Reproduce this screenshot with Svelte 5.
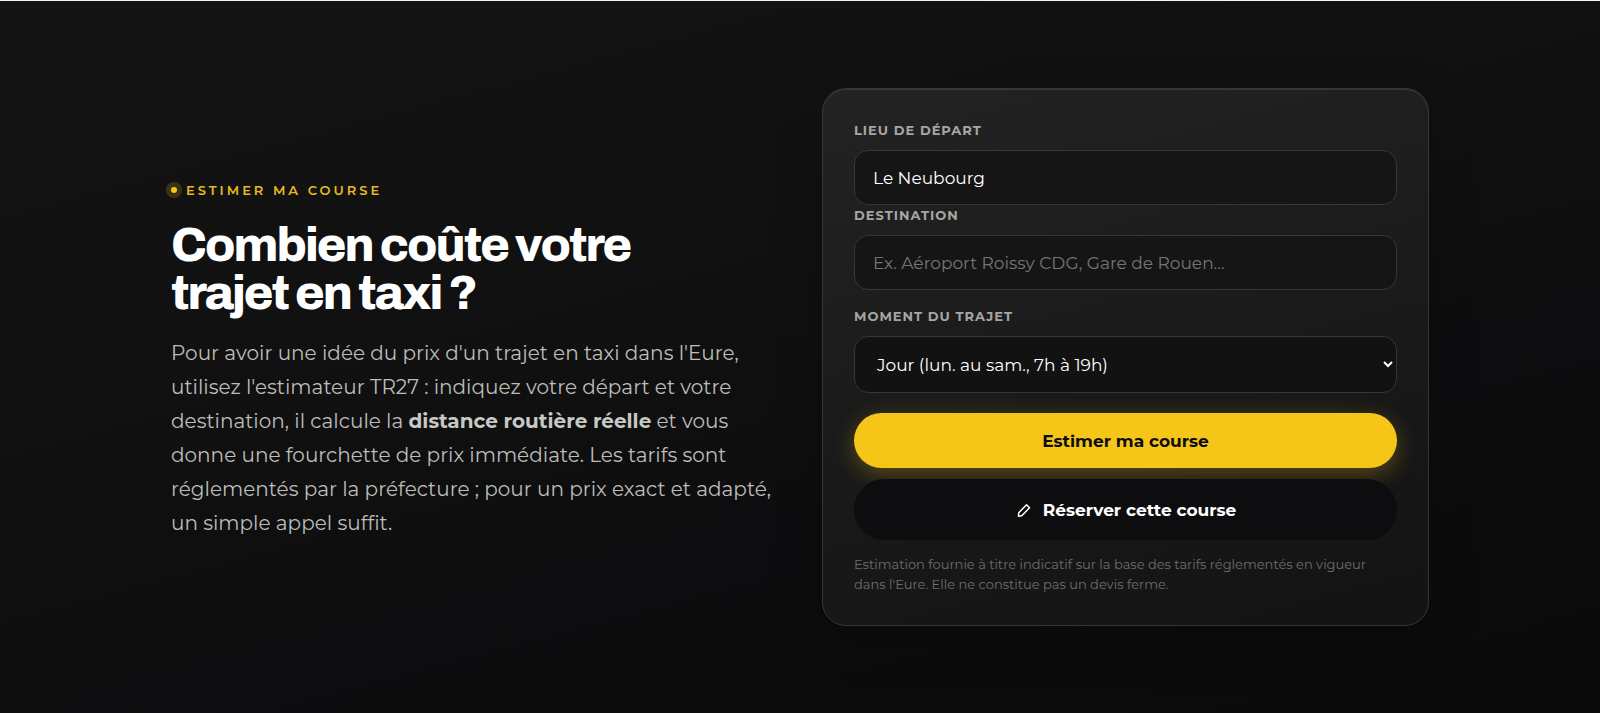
<script>
  let depart = $state("Le Neubourg");
  let destination = $state("");
  let moment = $state("jour");

  const moments = [
    ["jour", "Jour (lun. au sam., 7h à 19h)"],
    ["nuit", "Nuit, dimanche et jours fériés"],
  ];
</script>

<section class="estimate">
  <div class="container">
    <div class="intro">
      <p class="eyebrow"><span class="dot"></span>Estimer ma course</p>
      <h2>Combien coûte votre<br />trajet en taxi ?</h2>
      <p class="lead">
        Pour avoir une idée du prix d'un trajet en taxi dans l'Eure,<br />
        utilisez l'estimateur TR27 : indiquez votre départ et votre<br />
        destination, il calcule la <strong>distance routière réelle</strong> et vous<br />
        donne une fourchette de prix immédiate. Les tarifs sont<br />
        réglementés par la préfecture ; pour un prix exact et adapté,<br />
        un simple appel suffit.
      </p>
    </div>

    <form class="card" onsubmit={(e) => e.preventDefault()}>
      <label for="depart">Lieu de départ</label>
      <input id="depart" type="text" bind:value={depart} />

      <label for="destination">Destination</label>
      <input id="destination" type="text" placeholder="Ex. Aéroport Roissy CDG, Gare de Rouen…" bind:value={destination} />

      <label class="spaced" for="moment">Moment du trajet</label>
      <select id="moment" bind:value={moment}>
        {#each moments as [key, text]}
          <option value={key}>{text}</option>
        {/each}
      </select>

      <button class="btn primary" type="submit">Estimer ma course</button>
      <button class="btn dark" type="button">
        <svg viewBox="0 0 24 24" width="18" height="18" aria-hidden="true">
          <path d="M15.4 5 L19.4 9 L9 19.6 L4.6 20.2 L5 15.6 Z" />
        </svg>
        Réserver cette course
      </button>

      <p class="note">
        Estimation fournie à titre indicatif sur la base des tarifs réglementés en vigueur<br />
        dans l'Eure. Elle ne constitue pas un devis ferme.
      </p>
    </form>
  </div>
</section>

<style>
  :global(body) { background: #0a0a0b; }
  .estimate {
    box-sizing: border-box;
    min-height: 100vh;
    padding: 87px 24px;
    border-top: 1px solid #f4f4f4;
    background: linear-gradient(165deg, #141414 0%, #101010 45%, #0d0d0f 65%, #0a0a0a 100%);
    color: #fff;
    font-family: Montserrat, Inter, "Open Sans", sans-serif;
  }
  .container {
    display: grid;
    grid-template-columns: 1fr 1fr;
    gap: 44px;
    align-items: center;
    max-width: 1258px;
    margin: 0 auto;
  }
  .intro { padding-top: 6px; }
  .eyebrow {
    display: flex;
    align-items: center;
    gap: 9px;
    margin: 0 0 21px;
    color: #e8b923;
    font-size: 13px;
    line-height: 20px;
    font-weight: 600;
    letter-spacing: 3px;
    text-transform: uppercase;
  }
  .dot { width: 6px; height: 6px; border-radius: 50%; background: #f5c518; box-shadow: 0 0 0 5px rgba(245, 197, 24, 0.18); }
  h2 {
    margin: 0 0 19px;
    font-family: Archivo, "Liberation Sans", Arial, sans-serif;
    font-size: 48px;
    line-height: 48px;
    font-weight: 800;
    letter-spacing: -2px;
  }
  .lead { margin: 0; color: #bdbdbb; font-size: 20px; line-height: 34px; font-weight: 400; white-space: nowrap; }
  .lead strong { font-weight: 700; color: #c8c8c5; }

  .card {
    display: flex;
    flex-direction: column;
    min-width: 0;
    padding: 31px;
    border: 1px solid #363636;
    border-radius: 24px;
    background: linear-gradient(165deg, #232323 0%, #1b1b1b 45%, #131313 100%);
    box-shadow: 0 16px 50px rgba(0, 0, 0, 0.2), inset 0 1px 0 rgba(255, 255, 255, 0.1);
  }
  label {
    margin-bottom: 9px;
    color: #a6a6a4;
    font-size: 13px;
    line-height: 21px;
    font-weight: 700;
    letter-spacing: 1px;
    text-transform: uppercase;
  }
  label.spaced { margin-top: 16px; }
  input, select {
    box-sizing: border-box;
    width: 100%;
    height: 55px;
    padding: 0 18px;
    border: 1px solid #363636;
    border-radius: 14px;
    background: #151515;
    color: #fff;
    font: 400 17px Montserrat, Inter, "Open Sans", sans-serif;
  }
  input::placeholder { color: #757575; opacity: 1; }
  select { height: 57px; margin-bottom: 20px; background: #121212; }
  .btn {
    display: flex;
    align-items: center;
    justify-content: center;
    gap: 10px;
    border: 0;
    border-radius: 32px;
    font: 700 17px Montserrat, Inter, "Open Sans", sans-serif;
    cursor: pointer;
  }
  .primary { height: 55px; background: #f5c518; color: #0d0d0d; box-shadow: 0 6px 22px rgba(245, 197, 24, 0.3); }
  .dark { position: relative; height: 61px; margin-top: 11px; background: #0d0d0f; color: #fff; }
  .dark svg { fill: none; stroke: currentColor; stroke-width: 2; stroke-linejoin: round; }
  .note { margin: 14px 0 0; color: #6e6e6c; font-size: 13px; line-height: 20px; }

  @media (max-width: 900px) {
    .container { grid-template-columns: 1fr; }
    .lead { white-space: normal; }
  }
</style>
